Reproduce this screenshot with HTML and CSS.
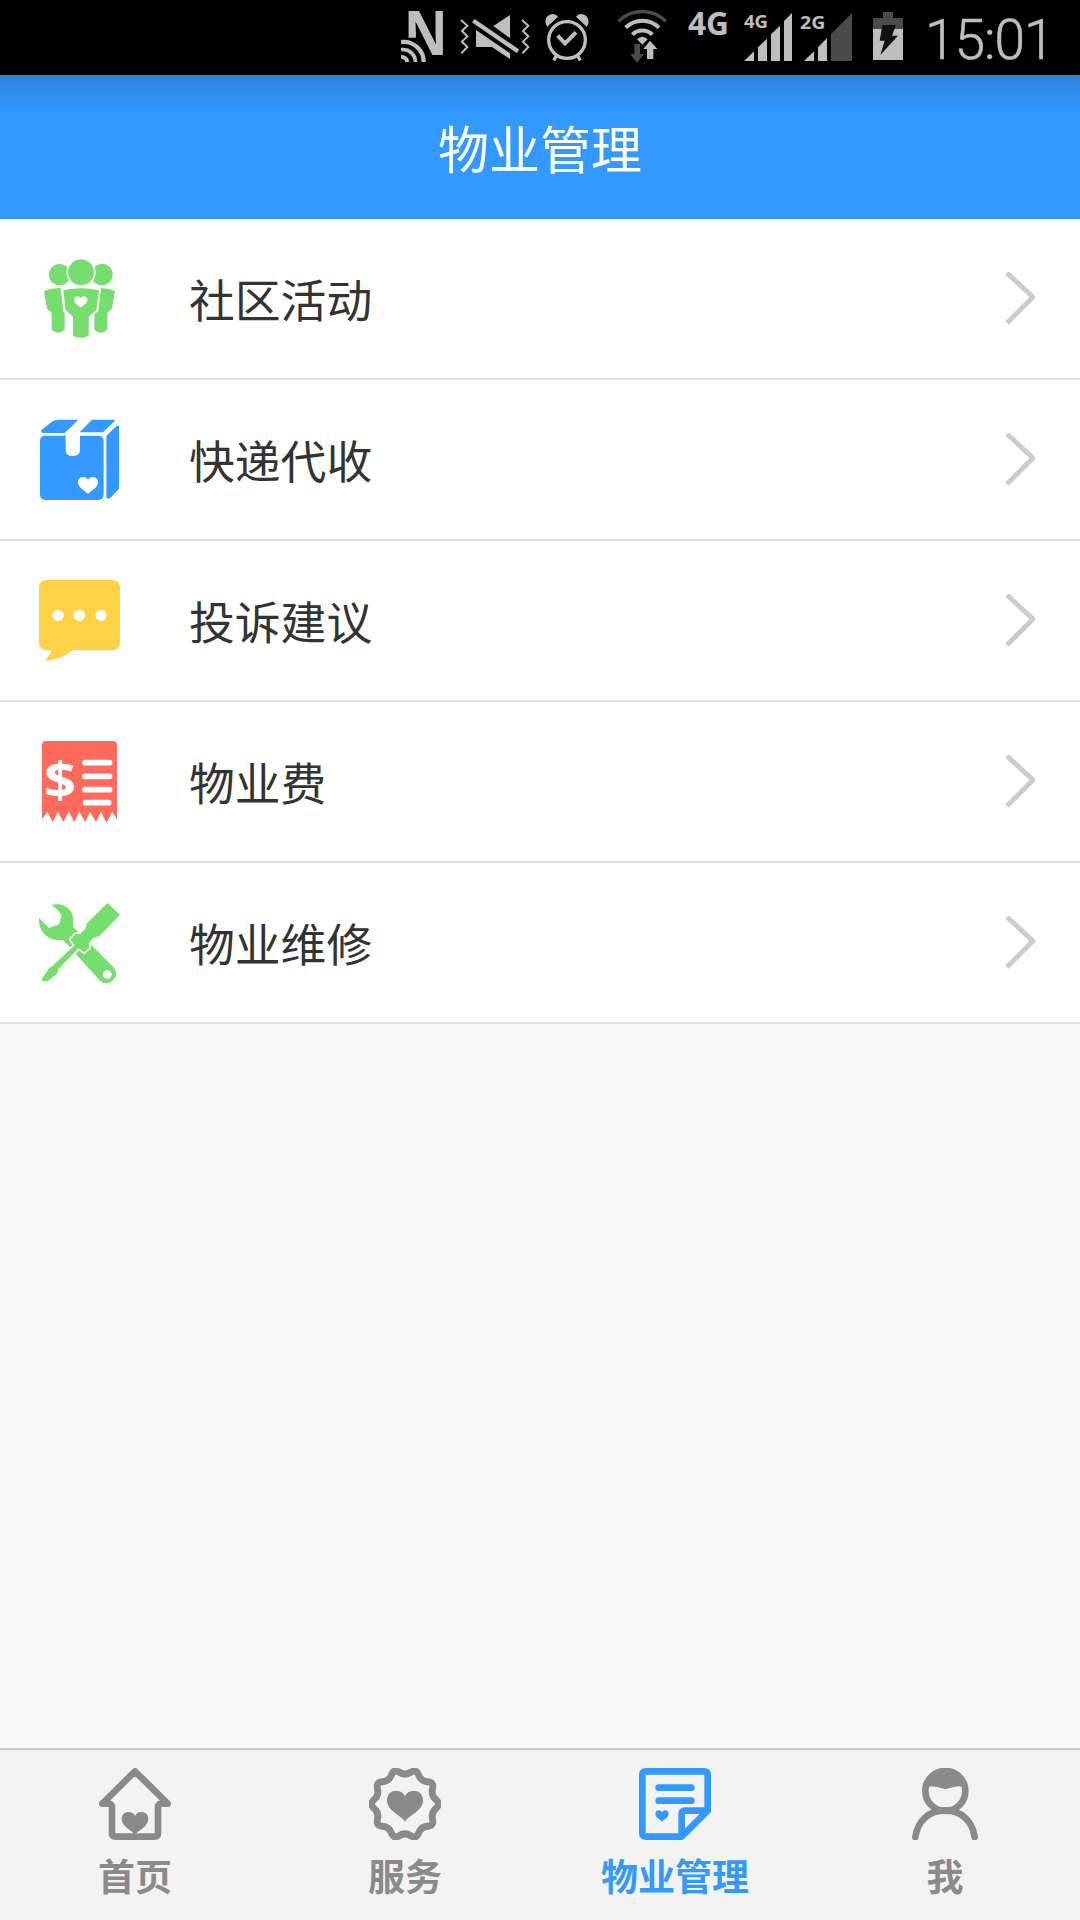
FILE: index.html
```html
<!doctype html>
<html lang="zh-CN">
<head>
	<meta charset="utf-8">
	<title>物业管理</title>
	<link rel="stylesheet" href="styles.css">
</head>
<body>
	<!-- shared shapes -->
	<svg class="defs" width="0" height="0">
		<defs>
			<path id="heart" d="M50 86C42 70 0 56 0 27C0 9 12 0 26 0C38 0 46 6 50 15C54 6 62 0 74 0C88 0 100 9 100 27C100 56 58 70 50 86z"/>
			<path id="arrow" d="M2 1L28 25L2 51"/>
		</defs>
	</svg>

	<div class="status">
		<svg class="nfc" width="50" height="75" viewBox="33 0 150 225">
			<text class="n" x="41" y="166" textLength="132" lengthAdjust="spacingAndGlyphs">N</text>
			<path class="black" d="M33 113H84V168H108V190H33z"/>
			<g class="line">
				<path d="M33 126A60 60 0 0 1 101 186" stroke-width="13"/>
				<path d="M33 149A37 37 0 0 1 76 186" stroke-width="11"/>
				<path d="M33 171A17 17 0 0 1 52 186" stroke-width="12"/>
			</g>
		</svg>
		<svg class="vibrate" width="70" height="75" viewBox="210 0 210 225">
			<path d="M360 45V115L310 78zM258 90L360 160V177L306 141H258z"/>
			<g class="line">
				<path d="M250 62L384 154" stroke-width="13"/>
				<path d="M213 60L232 77L216 93L232 109L216 125L232 141L214 160" stroke-width="6"/>
				<path d="M396 60L415 77L399 93L415 109L399 125L415 141L397 160" stroke-width="6"/>
			</g>
		</svg>
		<svg class="alarm" width="44" height="75" viewBox="465 0 132 225">
			<path d="M472 80C460 66 468 42 489 42Q499 42 504 50zM590 80C602 66 594 42 573 42Q563 42 558 50z"/>
			<g class="line">
				<circle cx="531" cy="120" r="55" stroke-width="10"/>
				<path d="M503 107L525 130L558 97" stroke-width="12"/>
				<path d="M500 167L491 181M562 167L571 181" stroke-width="10"/>
			</g>
		</svg>
		<svg class="wifi" width="50" height="75" viewBox="681 0 150 225">
			<g class="line">
				<path class="dimline" d="M686 64A99 99 0 0 1 827 64" stroke-width="10"/>
				<path d="M707 83A70 70 0 0 1 807 83" stroke-width="12"/>
				<path d="M727 104A43 43 0 0 1 787 104" stroke-width="12"/>
			</g>
			<path d="M741 118Q757 103 773 118L757 134z"/>
			<path class="dim" d="M733 132H750V162H762L741 189L721 162H733z"/>
			<path class="up" d="M780 122L802 147H790V177H771V147H760z"/>
		</svg>
		<svg class="net" width="42" height="75" viewBox="0 0 42 75">
			<text x="1" y="35" textLength="41" lengthAdjust="spacingAndGlyphs">4G</text>
		</svg>
		<svg class="signal" width="48" height="75" viewBox="42 0 144 225">
			<text x="42" y="85" textLength="72" lengthAdjust="spacingAndGlyphs">4G</text>
			<path d="M42 183L72 154V183zM84 183V142L111 116V183zM123 183V103L150 77V183zM162 183V63L186 39V183z"/>
		</svg>
		<svg class="signal second" width="52" height="75" viewBox="210 0 156 225">
			<text x="210" y="87" textLength="76" lengthAdjust="spacingAndGlyphs">2G</text>
			<path d="M222 183L252 154V183zM264 183V142L291 114V183z"/>
			<path class="dim" d="M303 183V102L366 39V183z"/>
		</svg>
		<svg class="battery" width="30" height="75" viewBox="429 0 90 225">
			<path class="dim" d="M459 36H489V54H519V87H429V54H459z"/>
			<path d="M429 87H519V180H429z"/>
			<path class="bolt" d="M457 75H498L486 107H504L451 165L464 122H449z"/>
		</svg>
		<span class="time">15:01</span>
	</div>

	<div class="header">物业管理</div>

	<ul class="menu">
		<li>
			<svg class="icon green" viewBox="117 114 243 243">
				<circle cx="179" cy="164" r="32"/>
				<circle cx="306" cy="164" r="32"/>
				<circle class="cut" cx="243" cy="157" r="39"/>
				<path d="M132 213Q158 203 182 204L190 275L194 279V329Q175 347 155 329V279L141 266z"/>
				<path d="M345 213Q325 204 303 204L295 273L283 283V329Q302 347 322 329V279L336 266z"/>
				<path d="M190 211Q243 199 297 211L289 270L266 290V347Q243 360 219 347V290L197 270z"/>
				<use class="white" href="#heart" transform="translate(222 229) scale(.4)"/>
			</svg>
			<span>社区活动</span>
			<svg class="arrow" width="30" height="54"><use href="#arrow"/></svg>
		</li>
		<li>
			<svg class="icon blue" viewBox="117 597 243 243">
				<path d="M124 636V630L156 605Q164 599 174 599H235L194 639H127zM239 637L276 599H344V603L309 637z"/>
				<path d="M136 647H197V690Q197 708 218 708Q240 708 240 690V647H294Q311 647 311 664V823Q311 840 294 840H136Q120 840 120 823V663Q120 647 136 647z"/>
				<path d="M319 648L350 617H357V806L331 834Q319 840 319 828z"/>
				<use class="white" href="#heart" transform="translate(234 771) scale(.6)"/>
			</svg>
			<span>快递代收</span>
			<svg class="arrow" width="30" height="54"><use href="#arrow"/></svg>
		</li>
		<li>
			<svg class="icon yellow" viewBox="117 120 243 243">
				<rect x="117" y="120" width="243" height="211" rx="23"/>
				<path d="M155 328H221Q190 358 134 363Q151 347 155 328z"/>
				<g class="white">
					<circle cx="174" cy="226" r="17"/>
					<circle cx="238" cy="226" r="17"/>
					<circle cx="303" cy="226" r="17"/>
				</g>
			</svg>
			<span>投诉建议</span>
			<svg class="arrow" width="30" height="54"><use href="#arrow"/></svg>
		</li>
		<li>
			<svg class="icon red" viewBox="117 603 243 243">
				<path d="M126 615Q126 603 138 603H339Q351 603 351 615V838L337 815L321 846H318L303 815L288 846L270 815L256 846L238 815L223 846L206 815L190 846L174 815L158 846L142 815L126 838z"/>
				<text class="white" x="132" y="774" textLength="97" lengthAdjust="spacingAndGlyphs">$</text>
				<path class="rows" d="M255 668H329M255 709H329M255 749H329M257 788H326"/>
			</svg>
			<span>物业费</span>
			<svg class="arrow" width="30" height="54"><use href="#arrow"/></svg>
		</li>
		<li>
			<svg class="icon green" viewBox="117 126 243 243">
				<!-- wrench -->
				<path d="M155 135C194 125 223 151 220 187L219 200L339 320C365 347 330 385 300 362L190 240C150 246 114 220 117 174L147 204L177 193L185 166Q174 148 155 135z"/>
				<circle class="white" cx="322" cy="343" r="13"/>
				<!-- screwdriver -->
				<path class="cut" d="M323 129L360 165L298 228L280 234L266 249L268 263L253 277L236 265L176 326L170 342L143 364H126V357L147 325L160 316L224 256L212 239L227 221L240 222L256 207L261 190z"/>
			</svg>
			<span>物业维修</span>
			<svg class="arrow" width="30" height="54"><use href="#arrow"/></svg>
		</li>
	</ul>

	<div class="tabs">
		<div class="tab">
			<svg viewBox="117 84 216 216">
				<path class="outline" d="M225 94L127 191H145Q156 191 156 204V279Q156 290 167 290H283Q294 290 294 279V204Q294 191 305 191H323z"/>
				<use href="#heart" transform="translate(185 216) scale(.8)"/>
			</svg>
			<span>首页</span>
		</div>
		<div class="tab">
			<svg viewBox="-108 -108 216 216">
				<path class="outline" d="M91 12.5Q76 25 81 43.5Q86 62 66.5 63.5Q47 65 40 83Q33 101 16.5 90.5Q0 80 -16.5 90.5Q-33 101 -40 83Q-47 65 -66.5 63.5Q-86 62 -81 43.5Q-76 25 -91 12.5Q-106 0 -91 -12.5Q-76 -25 -81 -43.5Q-86 -62 -66.5 -63.5Q-47 -65 -40 -83Q-33 -101 -16.5 -90.5Q0 -80 16.5 -90.5Q33 -101 40 -83Q47 -65 66.5 -63.5Q86 -62 81 -43.5Q76 -25 91 -12.5Q106 0 91 12.5z" transform="scale(1.02 1.05)"/>
				<use href="#heart" transform="translate(-54 -40) scale(1.08)"/>
			</svg>
			<span>服务</span>
		</div>
		<div class="tab active">
			<svg viewBox="177 84 216 216">
				<path class="outline" d="M198 94H372Q383 94 383 105V212L305 290H198Q187 290 187 279V105Q187 94 198 94z"/>
				<path class="outline" d="M305 287V222Q305 212 315 212H381"/>
				<path class="outline" d="M236 143H334M236 182H334"/>
				<use href="#heart" transform="translate(226 211) scale(.4)"/>
			</svg>
			<span>物业管理</span>
		</div>
		<div class="tab">
			<svg viewBox="987 84 216 216">
				<circle class="outline" cx="1096" cy="153" r="60"/>
				<path d="M1042 146C1045 135 1062 138 1096 148C1130 138 1147 135 1150 146L1156 134L1130 93H1062L1036 134z"/>
				<path class="outline" d="M1006 291C1013 242 1048 211 1095 211S1177 242 1184 291"/>
			</svg>
			<span>我</span>
		</div>
	</div>
</body>
</html>
```
FILE: styles.css
```css
	* {
		box-sizing: border-box;
	}
	body {
		margin: 0;
		height: 1920px;
		display: flex;
		flex-direction: column;
		background: #fafafa;
		color: #333;
		font-family: "Noto Sans CJK SC", sans-serif;
	}
	svg {
		display: block;
		flex: none;
	}
	.defs {
		position: absolute;
	}

	/* status bar */
	.status {
		display: flex;
		height: 75px;
		padding-left: 401px;
		background: #000;
		color: #bebebe;
		fill: #bebebe;
		font-family: "Open Sans", sans-serif;
		font-weight: 700;
	}
	.status .line {
		fill: none;
		stroke: #bebebe;
	}
	.status .dim {
		fill: #4b4b4b;
	}
	.status .dimline {
		stroke: #4b4b4b;
	}
	.black {
		fill: #000;
	}
	.n {
		font-size: 180px;
	}
	.vibrate {
		margin-left: 9px;
	}
	.alarm, .signal {
		margin-left: 15px;
	}
	.wifi {
		margin-left: 28px;
	}
	.up {
		stroke: #000;
		stroke-width: 8px;
		paint-order: stroke;
	}
	.net {
		margin-left: 20px;
		font-size: 32px;
	}
	.signal {
		font-size: 53px;
	}
	.second {
		margin-left: 8px;
	}
	.battery {
		margin-left: 21px;
	}
	.bolt {
		fill: #111;
	}
	.time {
		margin-left: 22px;
		font: 300 55px/81px Roboto, sans-serif;
		letter-spacing: -1px;
		-webkit-text-stroke: 0.6px #bebebe;
	}

	.header {
		height: 144px;
		background: linear-gradient(#2d83db, #3399ff 38px);
		color: #fff;
		font-size: 51px;
		line-height: 144px;
		text-align: center;
	}

	/* list */
	.menu {
		margin: 0;
		padding: 0;
		list-style: none;
		background: #fff;
	}
	.menu li {
		display: flex;
		align-items: center;
		height: 161px;
		padding: 0 45px 0 39px;
		border-bottom: 2px solid #dfdfdf;
		font-size: 45.8px;
	}
	.menu span {
		flex: 1;
		margin-left: 69px;
		padding-bottom: 2px;
	}
	.icon {
		width: 81px;
		height: 81px;
	}
	.arrow {
		fill: none;
		stroke: #ccc;
		stroke-width: 5px;
	}
	.green { fill: #75de6e; }
	.blue { fill: #3399ff; }
	.yellow { fill: #ffd147; }
	.red {
		fill: #ff6a5c;
		font: 700 150px "Open Sans", sans-serif;
	}
	.white {
		fill: #fff;
	}
	.cut {
		stroke: #fff;
		stroke-width: 10px;
		paint-order: stroke;
	}
	.rows {
		stroke: #fff;
		stroke-width: 17px;
		stroke-linecap: round;
	}

	/* bottom tabs */
	.tabs {
		display: flex;
		height: 172px;
		margin-top: auto;
		border-top: 2px solid #c8c8c8;
		background: #f3f3f3;
	}
	.tab {
		flex: 1;
		display: flex;
		flex-direction: column;
		align-items: center;
		padding-top: 18px;
		color: #8a8a8a;
		fill: #8a8a8a;
		font-size: 37px;
		font-weight: 700;
		line-height: 54px;
	}
	.tab svg {
		width: 72px;
		height: 72px;
		margin-bottom: 8px;
	}
	.active {
		color: #3399ff;
		fill: #3399ff;
	}
	.outline {
		fill: none;
		stroke: currentColor;
		stroke-width: 20px;
		stroke-linecap: round;
		stroke-linejoin: round;
	}
```
